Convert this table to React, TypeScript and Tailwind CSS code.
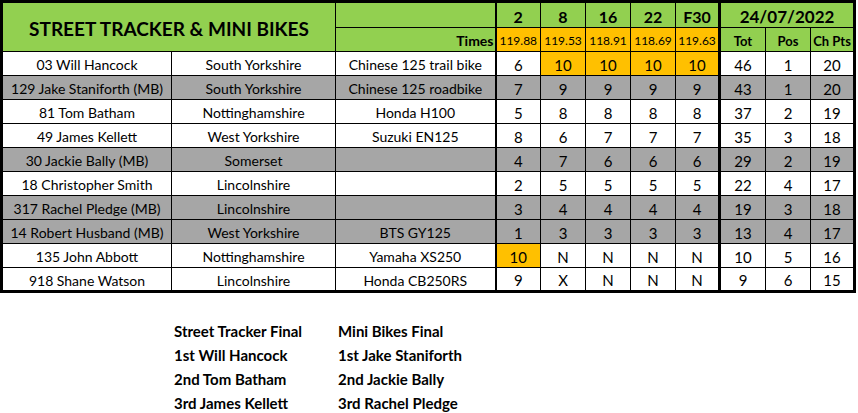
type Rider = {
  name: string;
  county: string;
  bike: string;
  races: string[];
  tot: number;
  pos: number;
  pts: number;
  grey?: boolean;
  hi?: number[];
};

const races = ['2', '8', '16', '22', 'F30'];
const times = ['119.88', '119.53', '118.91', '118.69', '119.63'];

const riders: Rider[] = [
  { name: '03 Will Hancock', county: 'South Yorkshire', bike: 'Chinese 125 trail bike', races: ['6', '10', '10', '10', '10'], tot: 46, pos: 1, pts: 20, hi: [1, 2, 3, 4] },
  { name: '129 Jake Staniforth (MB)', county: 'South Yorkshire', bike: 'Chinese 125 roadbike', races: ['7', '9', '9', '9', '9'], tot: 43, pos: 1, pts: 20, grey: true },
  { name: '81 Tom Batham', county: 'Nottinghamshire', bike: 'Honda H100', races: ['5', '8', '8', '8', '8'], tot: 37, pos: 2, pts: 19 },
  { name: '49 James Kellett', county: 'West Yorkshire', bike: 'Suzuki EN125', races: ['8', '6', '7', '7', '7'], tot: 35, pos: 3, pts: 18 },
  { name: '30 Jackie Bally (MB)', county: 'Somerset', bike: '', races: ['4', '7', '6', '6', '6'], tot: 29, pos: 2, pts: 19, grey: true },
  { name: '18 Christopher Smith', county: 'Lincolnshire', bike: '', races: ['2', '5', '5', '5', '5'], tot: 22, pos: 4, pts: 17 },
  { name: '317 Rachel Pledge (MB)', county: 'Lincolnshire', bike: '', races: ['3', '4', '4', '4', '4'], tot: 19, pos: 3, pts: 18, grey: true },
  { name: '14 Robert Husband (MB)', county: 'West Yorkshire', bike: 'BTS GY125', races: ['1', '3', '3', '3', '3'], tot: 13, pos: 4, pts: 17, grey: true },
  { name: '135 John Abbott', county: 'Nottinghamshire', bike: 'Yamaha XS250', races: ['10', 'N', 'N', 'N', 'N'], tot: 10, pos: 5, pts: 16, hi: [0] },
  { name: '918 Shane Watson', county: 'Lincolnshire', bike: 'Honda CB250RS', races: ['9', 'X', 'N', 'N', 'N'], tot: 9, pos: 6, pts: 15 },
];

const finals = [
  ['Street Tracker Final', 'Mini Bikes Final'],
  ['1st Will Hancock', '1st Jake Staniforth'],
  ['2nd Tom Batham', '2nd Jackie Bally'],
  ['3rd James Kellett', '3rd Rachel Pledge'],
];

const cell = 'border border-black p-0 text-center align-middle';

export default function App() {
  return (
    <div className="w-[858px] h-[413px] bg-white text-black font-['Lato','Liberation_Sans',sans-serif] text-[14px] leading-none">
      <table className="table-fixed border-collapse border-[3px] border-black w-[856px]">
        <colgroup>
          <col className="w-[170px]" />
          <col className="w-[164px]" />
          <col className="w-[160px]" />
          <col className="w-[45px]" />
          <col className="w-[45px]" />
          <col className="w-[45px]" />
          <col className="w-[45px]" />
          <col className="w-[44px]" />
          <col className="w-[46px]" />
          <col className="w-[45px]" />
          <col className="w-[44px]" />
        </colgroup>
        <thead>
          <tr className="h-[26px] bg-[#92d050]">
            <th colSpan={2} rowSpan={2} className={`${cell} text-[19px] font-bold pt-[3px]`}>
              STREET TRACKER &amp; MINI BIKES
            </th>
            <th className={`${cell} border-r-2`}></th>
            {races.map((r, i) => (
              <th key={r} className={`${cell} text-[16px] font-bold pt-[3px] ${i === 4 ? 'border-r-[3px]' : ''}`}>
                {r}
              </th>
            ))}
            <th colSpan={3} className={`${cell} text-[17px] font-bold pt-[2px]`}>
              24/07/2022
            </th>
          </tr>
          <tr className="h-[24px]">
            <th className={`${cell} border-r-2 bg-[#92d050] text-right font-bold pr-[1px] pt-[3px]`}>Times</th>
            {times.map((t, i) => (
              <td key={t} className={`${cell} bg-[#ffc000] text-[12px] pt-[3px] ${i === 4 ? 'border-r-[3px]' : ''}`}>
                {t}
              </td>
            ))}
            <th className={`${cell} bg-[#92d050] text-[13px] font-bold pt-[3px]`}>Tot</th>
            <th className={`${cell} bg-[#92d050] text-[13px] font-bold pt-[3px]`}>Pos</th>
            <th className={`${cell} bg-[#92d050] text-[13px] font-bold pt-[3px]`}>Ch Pts</th>
          </tr>
        </thead>
        <tbody>
          {riders.map((r) => (
            <tr key={r.name} className={`h-[24px] ${r.grey ? 'bg-[#a6a6a6]' : 'bg-white'}`}>
              <td className={`${cell} pt-[3px]`}>{r.name}</td>
              <td className={`${cell} pt-[3px]`}>{r.county}</td>
              <td className={`${cell} border-r-2 pt-[3px]`}>{r.bike}</td>
              {r.races.map((v, i) => (
                <td
                  key={i}
                  className={`${cell} text-[15px] pt-[3px] ${r.hi?.includes(i) ? 'bg-[#ffc000]' : ''} ${i === 4 ? 'border-r-[3px]' : ''}`}
                >
                  {v}
                </td>
              ))}
              <td className={`${cell} text-[15px] pt-[3px]`}>{r.tot}</td>
              <td className={`${cell} text-[15px] pt-[3px]`}>{r.pos}</td>
              <td className={`${cell} text-[15px] pt-[3px]`}>{r.pts}</td>
            </tr>
          ))}
        </tbody>
      </table>

      {/* finals results under the table */}
      <div className="mt-[26px] pl-[174px] grid grid-cols-[164px_auto] text-[15px] font-bold">
        {finals.map(([a, b]) => (
          <div key={a} className="contents">
            <div className="h-[24px] flex items-center">{a}</div>
            <div className="h-[24px] flex items-center">{b}</div>
          </div>
        ))}
      </div>
    </div>
  );
}
